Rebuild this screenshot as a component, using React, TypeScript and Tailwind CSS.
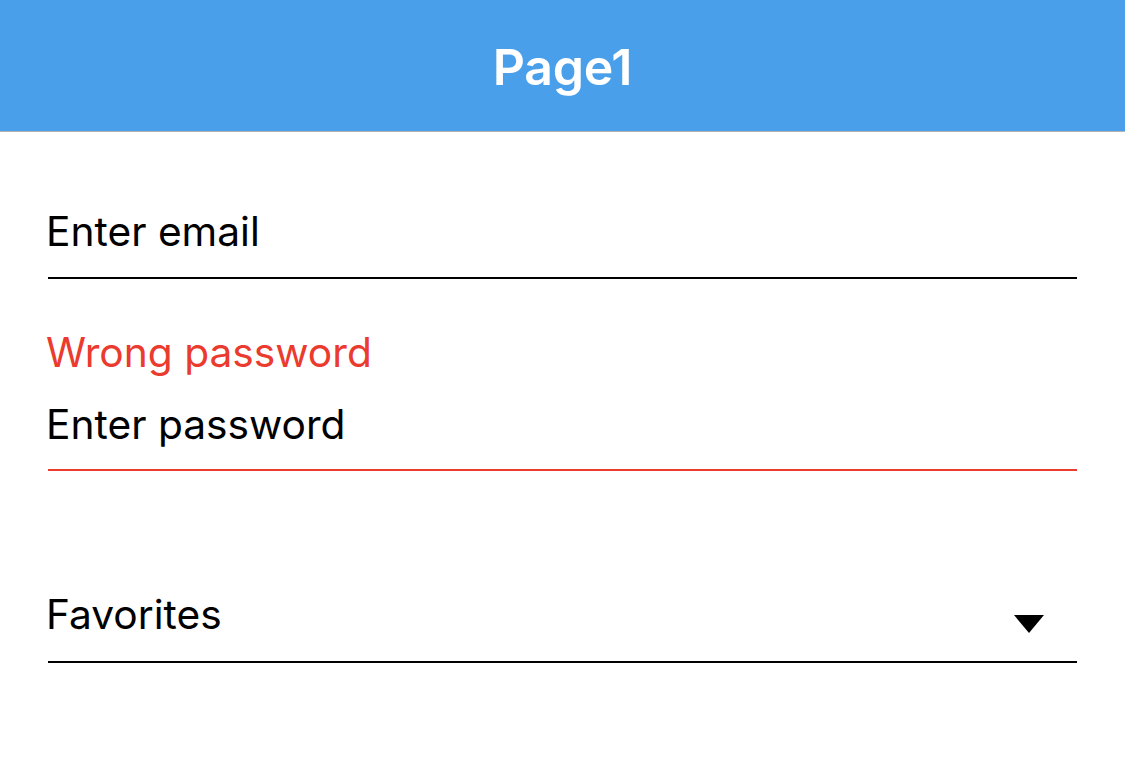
export default function App() {
  return (
    <div className="w-[1125px] h-[759px] bg-white" style={{ fontFamily: 'Inter, "Noto Sans", sans-serif' }}>
      <header className="h-[132px] bg-[#4a9fea] border-b border-[#b3b3b3] flex items-center justify-center">
        <h1 className="text-[50px] font-semibold text-white leading-none tracking-[-0.3px] mt-[2px]">Page1</h1>
      </header>
      <main className="px-[48px]">
        <div className="mt-[76px] pb-[21px] border-b-2 border-black">
          <div className="-ml-[2px] text-[40.7px] leading-[48px] text-black">Enter email</div>
        </div>
        <div className="-ml-[2px] mt-[50px] text-[40.7px] leading-[48px] text-[#eb3a2e]">Wrong password</div>
        <div className="mt-[24px] pb-[20px] border-b-2 border-[#eb3a2e]">
          <div className="-ml-[2px] text-[40.7px] leading-[48px] text-black">Enter password</div>
        </div>
        <div className="mt-[120px] pb-[22px] border-b-2 border-black flex items-end justify-between">
          <div className="-ml-[2px] text-[40.7px] leading-[48px] text-black">Favorites</div>
          <svg width="30" height="18" viewBox="0 0 30 18" className="mr-[33px] mb-[6px]">
            <polygon points="0,0 30,0 15,18" fill="black" />
          </svg>
        </div>
      </main>
    </div>
  );
}
